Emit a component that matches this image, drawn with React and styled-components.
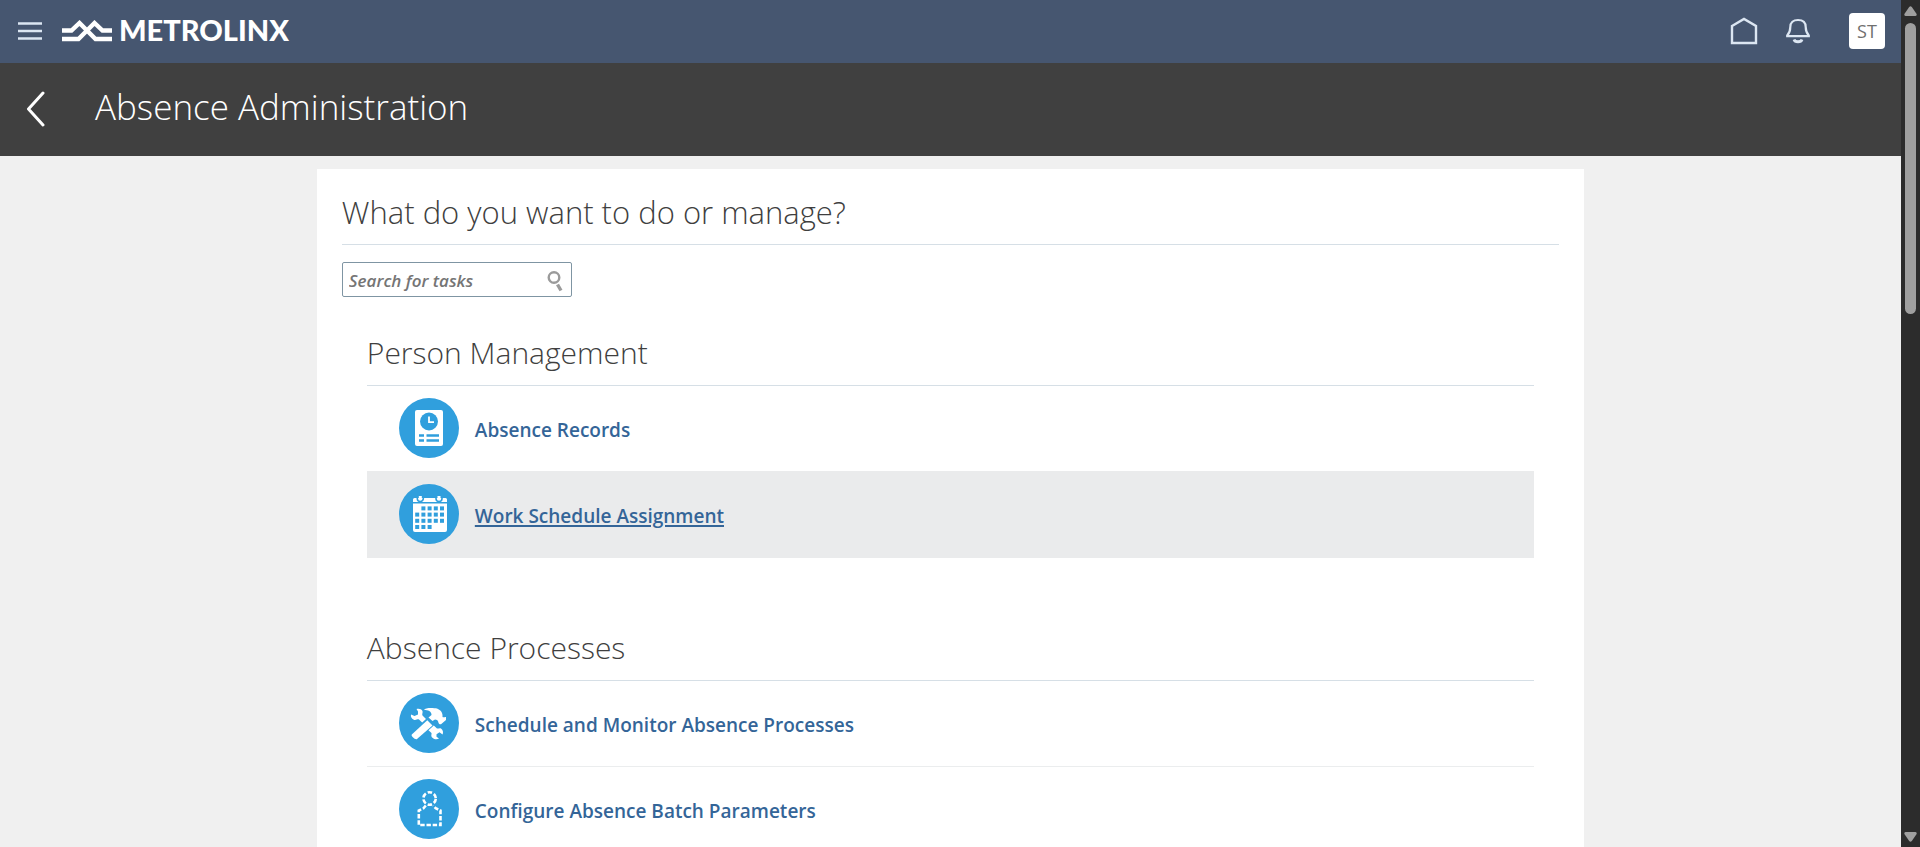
import React from "react";
import styled, { createGlobalStyle } from "styled-components";

const sans = '"Open Sans", "Noto Sans", sans-serif';

const GlobalStyle = createGlobalStyle`
  *, *::before, *::after { box-sizing: border-box; }
  html, body { margin: 0; }
  body {
    font-family: ${sans};
    background: #f0f0f0;
    color: #3f3f3f;
  }
  h1, h2, h3, ul { margin: 0; padding: 0; }
  button { font: inherit; padding: 0; border: 0; background: none; color: inherit; cursor: pointer; }
`;

const Shell = styled.div`
  display: flex;
  height: 100vh;
  overflow: hidden;
`;

const Page = styled.div`
  flex: 1;
  min-width: 0;
  overflow: hidden;
`;

const TopBar = styled.header`
  display: flex;
  align-items: center;
  height: 63px;
  padding: 0 16px 1px;
  background: #465670;
  color: #dce6f2;
`;

const IconButton = styled.button`
  display: grid;
  place-items: center;
  width: ${(p) => p.$width || 28}px;
  height: 36px;
`;

const Brand = styled.a`
  display: flex;
  align-items: center;
  gap: 7px;
  margin-left: 18px;
  color: #fff;
  font: 900 29px/36px Lato, ${sans};
  text-decoration: none;
`;

const BrandName = styled.span`
  padding-bottom: 2px;
`;

const TopActions = styled.nav`
  display: flex;
  align-items: center;
  gap: 26px;
  margin-left: auto;
`;

const Avatar = styled.button`
  && {
    width: 36px;
    height: 36px;
    margin-left: 11px;
    border-radius: 4px;
    background: #fff;
    color: #6f6f6f;
    font-size: 18px;
  }
`;

const TitleBar = styled.div`
  display: flex;
  align-items: center;
  gap: 47px;
  height: 93px;
  padding: 0 22px 2px;
  background: #404040;
  color: #fff;
`;

const PageTitle = styled.h1`
  padding-bottom: 4px;
  font-size: 35px;
  line-height: 48px;
  font-weight: 300;
`;

const Card = styled.main`
  width: calc(100% * 2 / 3);
  min-height: 100vh;
  margin: 13px auto 0;
  padding: 19px 25px;
  background: #fff;
`;

const Heading = styled.h2`
  font-size: ${(p) => (p.$sub ? 30 : 31)}px;
  line-height: 48px;
  font-weight: 300;
  padding-bottom: 8px;
  border-bottom: 1px solid #d6dfe6;
`;

const SearchBox = styled.form`
  display: flex;
  align-items: center;
  width: 230px;
  height: 35px;
  margin-top: 17px;
  padding: 2px 6px 0;
  border: 1px solid #7f95a3;
  border-radius: 2px;
`;

const SearchInput = styled.input`
  flex: 1;
  min-width: 0;
  padding: 0;
  border: 0;
  outline: 0;
  background: none;
  font: italic 600 17px/24px ${sans};
  &::placeholder { color: #757575; opacity: 1; }
`;

const Section = styled.section`
  margin: ${(p) => (p.$first ? 32 : 66)}px 25px 0;
`;

const TaskList = styled.ul`
  list-style: none;
`;

const TaskRow = styled.li`
  display: flex;
  align-items: center;
  gap: 16px;
  height: 86px;
  padding: 0 32px 1px;
  border-top: 1px solid ${(p) => (p.$active ? "#eaebec" : "#ebedee")};
  background: ${(p) => (p.$active ? "#eaebec" : "#fff")};
  &:first-child { border-top: 0; height: 85px; }
  &:last-child { height: 87px; padding-bottom: 2px; }
`;

const TaskLink = styled.a`
  padding-top: 4px;
  color: #346598;
  font-size: 19px;
  line-height: 28px;
  font-weight: 600;
  text-decoration: ${(p) => (p.$active ? "underline" : "none")};
  text-decoration-thickness: 2px;
  text-underline-offset: 2px;
`;

const ScrollTrack = styled.div`
  display: flex;
  flex-direction: column;
  align-items: center;
  width: 19px;
  padding: 6px 0 5px;
  background: #2c2c2c;
`;

const ScrollThumb = styled.div`
  width: 11px;
  height: 34.8%;
  margin: 7px 0 auto;
  border-radius: 6px;
  background: #9f9f9f;
`;

const MenuIcon = () => (
  <svg width="24" height="18" viewBox="0 0 24 18" fill="none" stroke="currentColor" strokeWidth="2.4">
    <path d="M0 1.5H24M0 9H24M0 16.5H24" />
  </svg>
);

const LogoMark = () => (
  <svg width="50" height="22" viewBox="0 0 50 22" fill="none" stroke="currentColor" strokeWidth="4.4">
    <path d="M0 10.5H9.5L17.5 3L33.5 19H50M0 19H16.5L32.5 3L40.5 10.5H50" />
  </svg>
);

const HomeIcon = () => (
  <svg width="28" height="28" viewBox="0 0 28 28" fill="none" stroke="currentColor" strokeWidth="2.4">
    <path d="M2 9L14 2L26 9V26H2Z" />
  </svg>
);

const BellIcon = () => (
  <svg width="24" height="26" viewBox="0 0 24 26" fill="none" stroke="currentColor" strokeWidth="2.2">
    <path d="M1.2 18.2V17.5C3.5 15 4.3 12.5 4.3 9C4.3 4.5 7.3 2 12 2S19.7 4.5 19.7 9C19.7 12.5 20.5 15 22.8 17.5V18.2Z" />
    <path d="M8 21.5C9 24.5 15 24.5 16 21.5" strokeWidth="2.8" />
  </svg>
);

const BackIcon = () => (
  <svg width="26" height="36" viewBox="0 0 26 36" fill="none" stroke="currentColor" strokeWidth="3" strokeLinecap="round" strokeLinejoin="round">
    <path d="M21 2L6.5 18L21 34" />
  </svg>
);

const SearchIcon = () => (
  <svg width="16" height="22" viewBox="0 0 16 22" fill="none" stroke="#9b9b9b">
    <circle cx="7" cy="7.5" r="5.3" strokeWidth="2.4" />
    <path d="M10.5 14.5L14 20.5" strokeWidth="3.4" />
  </svg>
);

const RecordGlyph = () => (
  <>
    <rect x="16" y="12" width="28" height="36" rx="2" fill="#fff" />
    <circle cx="30" cy="23.5" r="9" fill="#309fdd" />
    <path d="M30 18.5V24.2H35" fill="none" stroke="#fff" strokeWidth="1.8" />
    <path d="M20 37.5H25M27.5 37.5H40M20 42.5H25M27.5 42.5H40" stroke="#309fdd" strokeWidth="2.6" />
  </>
);

const calendarCells = [
  [1, 2, 3, 4],
  [0, 1, 2, 3, 4],
  [0, 1, 2, 3, 4],
  [0, 1, 2],
];

const CalendarGlyph = () => (
  <>
    <path d="M14 18V15.5Q14 14 15.5 14H46.5Q48 14 48 15.5V18ZM14 19.5H48V46Q48 48 46 48H16Q14 48 14 46Z" fill="#fff" />
    <path d="M18.3 13V14.5A3 3 0 0 0 24.3 14.5V13M37 13V14.5A3 3 0 0 0 43 14.5V13" fill="none" stroke="#309fdd" strokeWidth="1.6" />
    <path d="M21.3 12V15.5M40 12V15.5" stroke="#fff" strokeWidth="3" />
    {calendarCells.map((row, r) =>
      row.map((c) => (
        <rect key={`${r}-${c}`} x={16.2 + c * 6.2} y={22.4 + r * 6.2} width="4" height="4" fill="#309fdd" />
      ))
    )}
  </>
);

const ToolsGlyph = () => (
  <g fill="#fff">
    <path d="M25 16.8C26 14.5 34 14.6 38 15.5C42 17 44 20 43.5 24C45 25 46 23.5 47 24V27L42 31.3C40.5 31.5 39.5 30.5 39.3 29C38.8 27 37.5 26.7 36 26.5L33.5 28L29.5 24.5L32.5 22C32.8 18.5 29 17 25 16.8Z" />
    <path d="M28.3 27.3L33.5 32.5L18 46C16.5 47.3 11.5 43 12.8 41.5Z" />
    <path d="M17.5 16C20 15.3 22.5 16 23.5 18C24 19.5 22.7 21.5 23.5 22.5L27 26L23.2 29.5L20 26.5C18.5 25.8 17 27.7 14.8 26.8C12.5 25.7 11.5 23.8 12 21.5L15.5 23L19 21.5V18.5Z" />
    <path d="M34.8 32.5L38 35.5C39.5 36 40.5 34.5 42 35.5C44 37 44.6 39.5 43.5 41.5L40.5 39.3L37.5 41.3V43.8L40 45.5C38 46.8 35.5 46.5 33.5 44.8C31.5 43 32.8 41.5 32.5 40L29.5 37.2Z" />
  </g>
);

const PersonGlyph = () => (
  <g fill="none" stroke="#fff" strokeWidth="2.6">
    <circle cx="30.6" cy="19.5" r="6.2" strokeDasharray="4.5 2" strokeDashoffset="-0.5" />
    <path d="M26.8 26.5L24.5 29.3L19.8 31.5V46H41.5V31.5L36.7 29.3L34.4 26.5" strokeDasharray="4.4 1.8" />
  </g>
);

const TaskIcon = ({ children }) => (
  <svg width="60" height="60" viewBox="0 0 60 60" aria-hidden="true">
    <circle cx="30" cy="30" r="30" fill="#309fdd" />
    {children}
  </svg>
);

const Arrow = ({ down }) => (
  <svg width="13" height="10" viewBox="0 0 13 10" fill="#9f9f9f">
    <path d={down ? "M1.5 0H11.5Q13.5 0.5 12.3 2.5L7.8 9Q6.5 10.5 5.2 9L0.7 2.5Q-0.5 0.5 1.5 0Z" : "M1.5 10H11.5Q13.5 9.5 12.3 7.5L7.8 1Q6.5 -0.5 5.2 1L0.7 7.5Q-0.5 9.5 1.5 10Z"} />
  </svg>
);

const sections = [
  {
    title: "Person Management",
    tasks: [
      { label: "Absence Records", glyph: RecordGlyph },
      { label: "Work Schedule Assignment", glyph: CalendarGlyph, active: true },
    ],
  },
  {
    title: "Absence Processes",
    tasks: [
      { label: "Schedule and Monitor Absence Processes", glyph: ToolsGlyph },
      { label: "Configure Absence Batch Parameters", glyph: PersonGlyph },
    ],
  },
];

export default function App() {
  return (
    <Shell>
      <GlobalStyle />
      <Page>
        <TopBar>
          <IconButton aria-label="Navigator"><MenuIcon /></IconButton>
          <Brand href="#home"><LogoMark /><BrandName>METROLINX</BrandName></Brand>
          <TopActions>
            <IconButton aria-label="Home"><HomeIcon /></IconButton>
            <IconButton aria-label="Notifications"><BellIcon /></IconButton>
            <Avatar aria-label="Settings and actions">ST</Avatar>
          </TopActions>
        </TopBar>
        <TitleBar>
          <IconButton aria-label="Back" $width={26}><BackIcon /></IconButton>
          <PageTitle>Absence Administration</PageTitle>
        </TitleBar>
        <Card>
          <Heading>What do you want to do or manage?</Heading>
          <SearchBox role="search">
            <SearchInput type="text" aria-label="Search for tasks" placeholder="Search for tasks" />
            <IconButton type="button" aria-label="Search" $width={20}><SearchIcon /></IconButton>
          </SearchBox>
          {sections.map((section, i) => (
            <Section key={section.title} $first={i === 0}>
              <Heading as="h3" $sub>{section.title}</Heading>
              <TaskList>
                {section.tasks.map(({ label, glyph: Glyph, active }) => (
                  <TaskRow key={label} $active={active}>
                    <TaskIcon><Glyph /></TaskIcon>
                    <TaskLink href="#task" $active={active}>{label}</TaskLink>
                  </TaskRow>
                ))}
              </TaskList>
            </Section>
          ))}
        </Card>
      </Page>
      <ScrollTrack aria-hidden="true">
        <Arrow />
        <ScrollThumb />
        <Arrow down />
      </ScrollTrack>
    </Shell>
  );
}
